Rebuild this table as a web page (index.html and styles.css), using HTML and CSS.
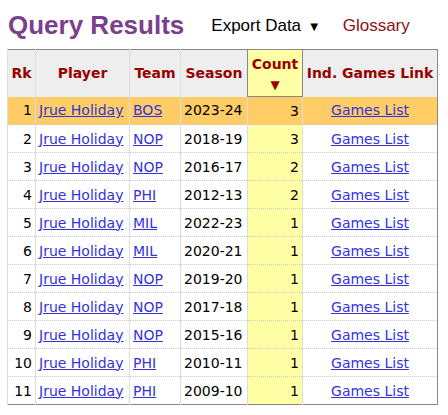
FILE: index.html
```html
<!DOCTYPE html>
<html lang="en">
<head>
  <meta charset="UTF-8">
  <title>Query Results</title>
  <link rel="stylesheet" href="styles.css">
</head>
<body>
  <div class="head">
    <h1>Query Results</h1>
    <span class="export">Export Data <span class="arrow">&#9660;</span></span>
    <a class="glossary" href="#">Glossary</a>
  </div>

  <table class="results">
    <colgroup>
      <col class="c-rk"><col class="c-player"><col class="c-team"><col class="c-season"><col class="c-count"><col class="c-link">
    </colgroup>
    <thead>
      <tr>
        <th>Rk</th>
        <th>Player</th>
        <th>Team</th>
        <th>Season</th>
        <th class="sorted">Count<br><span class="sort">&#9660;</span></th>
        <th>Ind. Games Link</th>
      </tr>
    </thead>
    <tbody>
      <tr class="hl"><td class="r">1</td><td><a href="#">Jrue Holiday</a></td><td><a href="#">BOS</a></td><td>2023-24</td><td class="r cnt">3</td><td class="c"><a href="#">Games List</a></td></tr>
      <tr><td class="r">2</td><td><a href="#">Jrue Holiday</a></td><td><a href="#">NOP</a></td><td>2018-19</td><td class="r cnt">3</td><td class="c"><a href="#">Games List</a></td></tr>
      <tr><td class="r">3</td><td><a href="#">Jrue Holiday</a></td><td><a href="#">NOP</a></td><td>2016-17</td><td class="r cnt">2</td><td class="c"><a href="#">Games List</a></td></tr>
      <tr><td class="r">4</td><td><a href="#">Jrue Holiday</a></td><td><a href="#">PHI</a></td><td>2012-13</td><td class="r cnt">2</td><td class="c"><a href="#">Games List</a></td></tr>
      <tr><td class="r">5</td><td><a href="#">Jrue Holiday</a></td><td><a href="#">MIL</a></td><td>2022-23</td><td class="r cnt">1</td><td class="c"><a href="#">Games List</a></td></tr>
      <tr><td class="r">6</td><td><a href="#">Jrue Holiday</a></td><td><a href="#">MIL</a></td><td>2020-21</td><td class="r cnt">1</td><td class="c"><a href="#">Games List</a></td></tr>
      <tr><td class="r">7</td><td><a href="#">Jrue Holiday</a></td><td><a href="#">NOP</a></td><td>2019-20</td><td class="r cnt">1</td><td class="c"><a href="#">Games List</a></td></tr>
      <tr><td class="r">8</td><td><a href="#">Jrue Holiday</a></td><td><a href="#">NOP</a></td><td>2017-18</td><td class="r cnt">1</td><td class="c"><a href="#">Games List</a></td></tr>
      <tr><td class="r">9</td><td><a href="#">Jrue Holiday</a></td><td><a href="#">NOP</a></td><td>2015-16</td><td class="r cnt">1</td><td class="c"><a href="#">Games List</a></td></tr>
      <tr><td class="r">10</td><td><a href="#">Jrue Holiday</a></td><td><a href="#">PHI</a></td><td>2010-11</td><td class="r cnt">1</td><td class="c"><a href="#">Games List</a></td></tr>
      <tr><td class="r">11</td><td><a href="#">Jrue Holiday</a></td><td><a href="#">PHI</a></td><td>2009-10</td><td class="r cnt">1</td><td class="c"><a href="#">Games List</a></td></tr>
    </tbody>
  </table>
</body>
</html>
```

FILE: styles.css
```css
body {
  margin: 0;
  padding: 0 7px;
  background: white;
  font-family: "DejaVu Sans", Verdana, sans-serif;
}
.head {
  display: flex;
  align-items: flex-start;
  height: 49px;
  padding-left: 1px;
  font-family: "Liberation Sans", Arial, sans-serif;
}
.head h1 {
  margin: 10px 0 0;
  font-size: 26px;
  line-height: 30px;
  color: #7b3f8c;
}
.export {
  margin: 16px 0 0 27px;
  font-size: 17px;
  line-height: 20px;
  color: #000;
}
.export .arrow {
  font-size: 13px;
  margin-left: 2px;
}
.glossary {
  margin: 16px 0 0 22px;
  font-size: 17px;
  line-height: 20px;
  color: #8b1111;
  text-decoration: none;
}
.results {
  border-collapse: collapse;
  table-layout: fixed;
  width: 430px;
  border: 1px solid #888;
  font-size: 14px;
}
.c-rk { width: 28px; }
.c-player { width: 94px; }
.c-team { width: 51px; }
.c-season { width: 67px; }
.c-count { width: 55px; }
.c-link { width: 135px; }
.results th {
  background: #eee;
  color: #900;
  font-weight: bold;
  height: 44px;
  padding: 0 2px;
  border-left: 1px solid #ddd;
  white-space: nowrap;
}
.results th.sorted {
  background: #ffffa6;
  border: 1px solid #888;
  line-height: 20px;
  padding-top: 2px;
}
.sort {
  font-size: 12px;
}
.results td {
  height: 27px;
  padding: 0 3px;
  border-left: 1px solid #ddd;
  border-top: 1px dotted #ccc;
  white-space: nowrap;
  color: #000;
}
.results td.r { text-align: right; }
.results td.c { text-align: center; }
.results td.cnt { background: #ffffa6; }
.results tr.hl td { background: #ffcc66; border-top: none; }
.results a {
  color: #3333dd;
  text-decoration: underline;
}
```
